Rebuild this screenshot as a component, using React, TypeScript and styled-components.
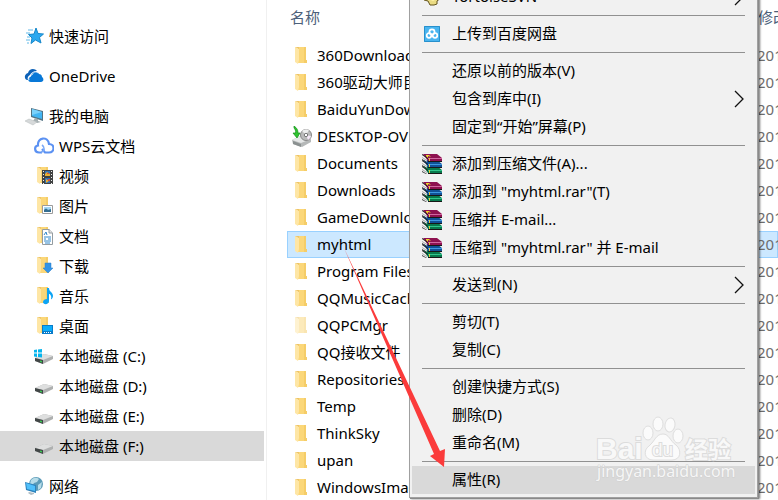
import React from "react";
import styled, { createGlobalStyle } from "styled-components";

const GlobalStyle = createGlobalStyle`
  * { box-sizing: border-box; }
  html, body, #root { margin: 0; padding: 0; }
  body {
    background: #fff;
    color: #000;
    font-family: "Noto Sans", "Noto Sans CJK SC", sans-serif;
    font-size: 15px;
    overflow: hidden;
  }
  button, table { font: inherit; color: inherit; }
`;

const Window = styled.div`
  position: relative;
  display: flex;
  height: 100vh;
  overflow: hidden;
`;

const Sidebar = styled.nav`
  flex: 0 0 267px;
  padding: 21px 2px 0 0;
  border-right: 1px solid #f0f0f0;
`;

const NavGroup = styled.div`
  margin-bottom: 10px;
`;

const NavLink = styled.a<{ $child?: boolean; $active?: boolean }>`
  display: flex;
  align-items: center;
  gap: 5px;
  height: 30px;
  padding-left: ${(p) => (p.$child ? 34 : 24)}px;
  color: #000;
  text-decoration: none;
  white-space: nowrap;
  line-height: 30px;
  background: ${(p) => (p.$active ? "#d9d9d9" : "transparent")};
`;

const Icon = styled.svg`
  display: block;
  flex: none;
`;

const Files = styled.main`
  flex: 1;
  min-width: 0;
  padding: 0 0 0 20px;
  overflow: hidden;
`;

const FileTable = styled.table`
  width: 100%;
  table-layout: fixed;
  border-collapse: separate;
  border-spacing: 0;
`;

const HeadCell = styled.th<{ $name?: boolean }>`
  width: ${(p) => (p.$name ? "470px" : "auto")};
  height: 42px;
  padding: 2px 0 10px ${(p) => (p.$name ? 3 : 1)}px;
  color: #4c607a;
  font-weight: 400;
  text-align: left;
  white-space: nowrap;
  line-height: 30px;
  overflow: hidden;
`;

const FileRow = styled.tr<{ $selected?: boolean }>`
  background: ${(p) => (p.$selected ? "#cce8ff" : "transparent")};
  box-shadow: ${(p) => (p.$selected ? "inset 0 0 0 1px #99d1ff" : "none")};
`;

const Cell = styled.td`
  height: 27px;
  padding: 0;
  color: #6d6d6d;
  line-height: 27px;
  white-space: nowrap;
  overflow: hidden;
`;

const FileName = styled.div`
  display: flex;
  align-items: center;
  gap: 4px;
  height: 27px;
  padding-left: 4px;
  color: #000;
`;

const Menu = styled.div`
  position: absolute;
  top: -21px;
  left: 409px;
  width: 349px;
  padding: 3px 2px;
  border: 1px solid #a0a0a0;
  background: #f1f1f1;
  box-shadow: 1px 1px 0 #8a8a8a, 2px 1px 2px rgba(0, 0, 0, 0.55);
`;

const MenuItem = styled.button<{ $hover?: boolean }>`
  display: flex;
  align-items: center;
  width: 100%;
  height: 28px;
  padding: 0 11px 0 10px;
  border: 0;
  background: ${(p) => (p.$hover ? "#d9d9d9" : "transparent")};
  color: #000;
  text-align: left;
  white-space: nowrap;
`;

const MenuIcon = styled.span`
  flex: 0 0 30px;
`;

const MenuLabel = styled.span`
  flex: 1;
  padding-bottom: 2px;
  line-height: 22px;
`;

const Separator = styled.hr`
  height: 1px;
  margin: 4px 10px;
  border: 0;
  background: #919191;
`;

const Overlay = styled.svg`
  position: absolute;
  top: 0;
  left: 0;
  pointer-events: none;
`;

const Watermark = styled.svg`
  position: absolute;
  top: 410px;
  left: 592px;
  pointer-events: none;
`;

function FolderShape({ x = 3 }: { x?: number }) {
  return (
    <g transform={`translate(${x} 0)`}>
      <path d="M3 1H11V14H12V17H3Z" fill="#fbd779" />
      <path d="M9 1H11V14H12V17H9Z" fill="#f5cd68" />
      <path d="M0 1L4 3V14L3 18L0 16Z" fill="#fee6a5" />
      <path d="M0 1H4V3Z" fill="#eec568" />
    </g>
  );
}

function FileIcon({ kind }: { kind?: string }) {
  if (kind === "backup") {
    return (
      <Icon width="22" height="22" viewBox="0 0 22 22">
        <path d="M1 14L9 10L20 13V16L11 21L2 18Z" fill="#b5b8b8" />
        <path d="M1 14L9 10L20 13L10 17Z" fill="#e6e8e8" />
        <path d="M2 15L10 18V21L2 18Z" fill="#8b9191" />
        <circle cx="15" cy="9" r="5.5" fill="#bbb" stroke="#888" />
        <path d="M15 9L11 5A6 6 0 0 1 18 4Z" fill="#eee" />
        <path d="M15 9L20 10A6 6 0 0 1 17 14Z" fill="#f5e8f7" />
        <circle cx="15" cy="9" r="1.7" fill="#fff" stroke="#777" />
        <path d="M3 0C6 2 7 4 7 7H9L6 12L2 7H4.500C5 5 4 3 3 2Z" fill="#2fc32f" stroke="#139119" strokeWidth=".7" />
      </Icon>
    );
  }
  return (
    <Icon width="22" height="20" viewBox="0 0 22 20" opacity={kind === "hidden" ? 0.5 : 1}>
      <FolderShape x={4} />
    </Icon>
  );
}

function Drive() {
  return (
    <>
      <path d="M1 12L10 8L19 10V13L9 18L1 15Z" fill="#aeb0b0" />
      <path d="M1 12L10 8L19 10L9 14Z" fill="#dedfdf" />
      <path d="M1 12L9 14V18L1 15Z" fill="#424747" />
      <path d="M6 14.5L8 15V16.5L6 16Z" fill="#38c950" />
    </>
  );
}

const navIcons: Record<string, React.ReactNode> = {
  star: (
    <>
      <path d="M12 2L14 7.5L19.5 8L15.5 11.5L17 17L11.5 14L7 17.5L8 12L4.5 8.5L10 8Z" fill="#2ba8ef" stroke="#1687ca" strokeWidth="1" />
      <path d="M4 4H9M2 7H6M3 11H6M2 14H6M3 17H5" stroke="#61b9e8" />
    </>
  ),
  onedrive: (
    <>
      <path d="M3 14C0 13 0 8 4 7C5 2 11 2 13 5C9 5 7 7 6 9C4 10 3 12 4 14Z" fill="#0d61b7" />
      <path d="M7 16C3 16 4 11 7 10.500C7 5.500 13 4 15 8C18 8 18 11 18 11C20 12 20 16 17 16Z" fill="#0878d7" />
      <path d="M5 14C4 11 6 9 8 9C9 6 12 5 14 7" fill="none" stroke="#fff" strokeWidth=".8" />
    </>
  ),
  pc: (
    <>
      <path d="M7 2L19 5V15L7 11Z" fill="#537384" />
      <path d="M8 3L18 6V13L8 10Z" fill="#43b5f3" />
      <path d="M8 3L18 6L8 9Z" fill="#7bd1fb" />
      <path d="M11 12L14 13V15L17 16L13 17L9 15Z" fill="#a5afb2" />
      <path d="M1 15L5 13L13 16L9 19Z" fill="#d6d9da" stroke="#b5baba" strokeWidth=".5" />
    </>
  ),
  wps: (
    <>
      <path d="M8 16.500H5C0 16.500 0 10 4 9.500C3 1 14 0 15 8C21 8 21 16.500 15 16.500H11L8 13" fill="none" stroke="#5b91f2" strokeWidth="2.200" />
      <path d="M7 16C11 16 11 11 8 9" fill="none" stroke="#7aa8f7" strokeWidth="1.600" />
    </>
  ),
  video: (
    <>
      <FolderShape />
      <path d="M8 4H19V18H8Z" fill="#414343" />
      <path d="M11 5H16V10H11ZM11 12H16V17H11Z" fill="#3271b7" />
      <path d="M11 8L13 6L16 8V10H11ZM12 13L15 15L12 17Z" fill="#e7b132" />
      <path d="M13 7H15V8H13ZM14 13H16V15H14Z" fill="#dc4e38" />
      <path d="M9.5 5V18M17.5 5V18" stroke="#eee" strokeDasharray="1 2" />
    </>
  ),
  picture: (
    <>
      <FolderShape />
      <path d="M8.500 9.500H18.500V17.500H8.500Z" fill="#fff" stroke="#9b9b9b" />
      <path d="M10 11H17V14H10Z" fill="#a4d7f4" />
      <path d="M10 14Q12 11 14 14L17 13V16H10Z" fill="#356f92" />
    </>
  ),
  document: (
    <>
      <FolderShape />
      <path d="M8.500 3.500H15L18.500 7V18.500H8.500Z" fill="#fff" stroke="#949ca0" />
      <path d="M15 3V7H18" fill="#e5e5e5" stroke="#949ca0" />
      <path d="M10 9L12 6L13 9M10 11H17M10 13H12M14 13H17M10 15H17M11 17H16" fill="none" stroke="#3188ca" />
    </>
  ),
  download: (
    <>
      <FolderShape />
      <path d="M11 7H17V12H19L14 17L9 12H11Z" fill="#3294e7" stroke="#2f7fc6" strokeWidth=".5" />
    </>
  ),
  music: (
    <>
      <FolderShape />
      <path d="M13 2H15C15 6 19 6 19 10C19 12 17 14 17 13C18 10 16 8 15 8V15C15 19 9 19 9 16C9 14 11 13 13 13Z" fill="#0ca4f5" />
    </>
  ),
  desktop: (
    <>
      <FolderShape />
      <path d="M8 9H19V18H8Z" fill="#087cca" />
      <path d="M9 10H18V15H9Z" fill="#0cadfa" />
      <path d="M10 16.500H17" stroke="#fff" strokeDasharray="1 1" />
    </>
  ),
  system: (
    <>
      <Drive />
      <path d="M0 4L3 3.500V6.500H0ZM4 3.500L8 3V6.500H4ZM0 7.500H3V11L0 10.500ZM4 7.500H8V11.500L4 11Z" fill="#06b5ed" />
    </>
  ),
  drive: <Drive />,
  network: (
    <>
      <circle cx="12" cy="8" r="7" fill="#5b9bb8" />
      <path d="M7 4Q11 0 15 3L13 6L10 7L8 10L6 8ZM14 9L18 6L17 12L14 14Z" fill="#b7dce8" />
      <path d="M1 6L12 9V17L2 14Z" fill="#2d83bd" />
      <path d="M2 7L11 10V15L3 13Z" fill="#4fc0fb" />
      <path d="M5 16L10 17V18L7 19L4 17Z" fill="#b1bdc4" />
    </>
  ),
};

function RarIcon() {
  const books = [
    { y: 12, cover: "#087a4d", light: "#2fc58b" },
    { y: 6, cover: "#105197", light: "#3d97e0" },
    { y: 0, cover: "#8e1150", light: "#d0679f" },
  ];
  return (
    <Icon width="20" height="20" viewBox="0 0 20 20">
      {books.map((b) => (
        <g key={b.y} transform={`translate(0 ${b.y})`}>
          <path d="M0 1L5 4V8L0 5Z" fill="#f4f4f4" />
          <path d="M0 3L5 6V7L0 4Z" fill="#aaa" />
          <path d="M1 0H15L20 4V7H6Z" fill={b.cover} />
          <path d="M6 4H20V5H6Z" fill={b.light} />
          <path d="M6 7H20V8H6Z" fill="#171717" />
          <path d="M0 0L6 4V5L0 1Z" fill="#171717" />
          <path d="M0 5L5 8H4L0 6Z" fill="#333" />
          <path d="M7 4H8V7H7Z" fill="#e5c83d" />
        </g>
      ))}
      <path d="M4 1H7L9 3L6 2L6 4L4 2Z" fill="#eed52b" />
    </Icon>
  );
}

function CloudIcon() {
  return (
    <Icon width="20" height="18" viewBox="0 0 20 18">
      <path d="M2 1H18V17H2Z" fill="#49b5f0" />
      <path d="M2.500 1.500H17.500V16.500H2.500Z" fill="none" stroke="#2890cc" />
      <g fill="none" stroke="#fff" strokeWidth="1.700">
        <circle cx="10" cy="7" r="2.600" />
        <circle cx="7" cy="10.500" r="2.300" />
        <circle cx="13" cy="10.500" r="2.300" />
      </g>
    </Icon>
  );
}

function TortoiseIcon() {
  return (
    <Icon width="20" height="20" viewBox="0 0 20 20">
      <path d="M2 10L5 4H14L19 11L15 14V17L12 18H8L6 14L2 13Z" fill="#eadb83" stroke="#62531b" />
      <path d="M6 7H13L15 12L11 14L6 12Z" fill="#fff3a8" />
    </Icon>
  );
}

const navGroups = [
  [{ icon: "star", label: "快速访问" }],
  [{ icon: "onedrive", label: "OneDrive" }],
  [
    { icon: "pc", label: "我的电脑" },
    { icon: "wps", label: "WPS云文档", child: true },
    { icon: "video", label: "视频", child: true },
    { icon: "picture", label: "图片", child: true },
    { icon: "document", label: "文档", child: true },
    { icon: "download", label: "下载", child: true },
    { icon: "music", label: "音乐", child: true },
    { icon: "desktop", label: "桌面", child: true },
    { icon: "system", label: "本地磁盘 (C:)", child: true },
    { icon: "drive", label: "本地磁盘 (D:)", child: true },
    { icon: "drive", label: "本地磁盘 (E:)", child: true },
    { icon: "drive", label: "本地磁盘 (F:)", child: true, active: true },
  ],
  [{ icon: "network", label: "网络" }],
] as { icon: string; label: string; child?: boolean; active?: boolean }[][];

const files: { name: string; kind?: string }[] = [
  { name: "360Downloads" },
  { name: "360驱动大师目录" },
  { name: "BaiduYunDownload" },
  { name: "DESKTOP-OV", kind: "backup" },
  { name: "Documents" },
  { name: "Downloads" },
  { name: "GameDownload" },
  { name: "myhtml" },
  { name: "Program Files" },
  { name: "QQMusicCache" },
  { name: "QQPCMgr", kind: "hidden" },
  { name: "QQ接收文件" },
  { name: "Repositories" },
  { name: "Temp" },
  { name: "ThinkSky" },
  { name: "upan" },
  { name: "WindowsImage" },
];

type Entry = { label: string; icon?: React.ReactNode; sub?: boolean; hover?: boolean };

const menuGroups: Entry[][] = [
  [{ label: "TortoiseSVN", icon: <TortoiseIcon />, sub: true }],
  [{ label: "上传到百度网盘", icon: <CloudIcon /> }],
  [{ label: "还原以前的版本(V)" }, { label: "包含到库中(I)", sub: true }, { label: "固定到“开始”屏幕(P)" }],
  [
    { label: "添加到压缩文件(A)...", icon: <RarIcon /> },
    { label: '添加到 "myhtml.rar"(T)', icon: <RarIcon /> },
    { label: "压缩并 E-mail...", icon: <RarIcon /> },
    { label: '压缩到 "myhtml.rar" 并 E-mail', icon: <RarIcon /> },
  ],
  [{ label: "发送到(N)", sub: true }],
  [{ label: "剪切(T)" }, { label: "复制(C)" }],
  [{ label: "创建快捷方式(S)" }, { label: "删除(D)" }, { label: "重命名(M)" }],
  [{ label: "属性(R)", hover: true }],
];

function BaiduMark() {
  return (
    <Watermark width="150" height="80" viewBox="0 0 150 80">
      <g fill="#fbfbfb" stroke="#dedede" strokeWidth="1">
        <ellipse cx="56" cy="23" rx="5" ry="7" />
        <ellipse cx="66" cy="14" rx="5" ry="7" />
        <ellipse cx="78" cy="15" rx="5" ry="7" transform="rotate(10 78 15)" />
        <ellipse cx="86" cy="26" rx="5" ry="7" />
        <path d="M71 24C77 24 78 31 84 35C90 40 89 50 80 50H61C52 50 51 40 57 36C63 31 64 24 71 24Z" />
      </g>
      <g fontFamily="Liberation Sans, sans-serif" fontWeight="700" fill="#f8f8f8" stroke="#dcdcdc" strokeWidth="2" paintOrder="stroke">
        <text x="4" y="49" fontSize="30">Bai</text>
        <text x="60" y="46" fontSize="19" fontWeight="400">du</text>
        <text x="93" y="48" fontSize="23" fontFamily="Noto Sans CJK SC, sans-serif">经验</text>
      </g>
      <text x="5" y="67" fontSize="16" fontFamily="Noto Sans, sans-serif" fill="#f6f6f6" stroke="#cfcfcf" strokeWidth="1" paintOrder="stroke">
        jingyan.baidu.com
      </text>
    </Watermark>
  );
}

export default function App() {
  return (
    <Window>
      <GlobalStyle />
      <Sidebar aria-label="导航">
        {navGroups.map((group, i) => (
          <NavGroup key={i}>
            {group.map((n) => (
              <NavLink key={n.label} href="#" $child={n.child} $active={n.active}>
                <Icon width="20" height="20" viewBox="0 0 20 20">{navIcons[n.icon]}</Icon>
                {n.label}
              </NavLink>
            ))}
          </NavGroup>
        ))}
      </Sidebar>
      <Files>
        <FileTable>
          <thead>
            <tr>
              <HeadCell $name>名称</HeadCell>
              <HeadCell>修改日期</HeadCell>
            </tr>
          </thead>
          <tbody>
            {files.map((f) => (
              <FileRow key={f.name} $selected={f.name === "myhtml"}>
                <Cell>
                  <FileName>
                    <FileIcon kind={f.kind} />
                    {f.name}
                  </FileName>
                </Cell>
                <Cell>201</Cell>
              </FileRow>
            ))}
          </tbody>
        </FileTable>
      </Files>
      <Menu role="menu">
        {menuGroups.map((group, i) => (
          <React.Fragment key={i}>
            {i > 0 && <Separator />}
            {group.map((m) => (
              <MenuItem key={m.label} role="menuitem" type="button" $hover={m.hover}>
                <MenuIcon>{m.icon}</MenuIcon>
                <MenuLabel>{m.label}</MenuLabel>
                {m.sub && (
                  <Icon width="10" height="18" viewBox="0 0 10 18">
                    <path d="M1 1L9 9L1 17" fill="none" stroke="#111" strokeWidth="1.300" />
                  </Icon>
                )}
              </MenuItem>
            ))}
          </React.Fragment>
        ))}
      </Menu>
      <BaiduMark />
      <Overlay width="460" height="480" viewBox="0 0 460 480">
        <path d="M344 248L440 451L445 449L444 467L430 456L434 454Z" fill="#fb3b3b" />
      </Overlay>
    </Window>
  );
}
